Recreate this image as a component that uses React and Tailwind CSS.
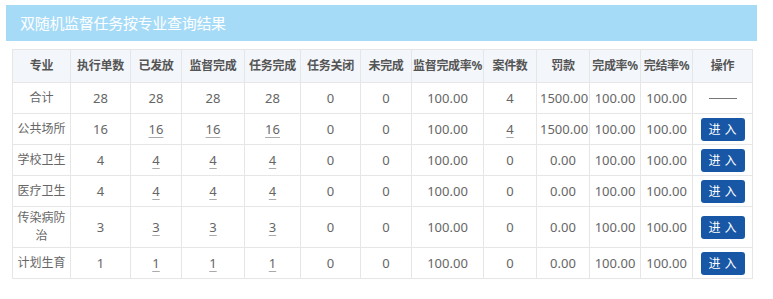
import React from 'react';

const cols = [
  { label: '专业', w: 58 },
  { label: '执行单数', w: 60 },
  { label: '已发放', w: 51 },
  { label: '监督完成', w: 63 },
  { label: '任务完成', w: 56 },
  { label: '任务关闭', w: 60 },
  { label: '未完成', w: 51 },
  { label: '监督完成率%', w: 72 },
  { label: '案件数', w: 53 },
  { label: '罚款', w: 53 },
  { label: '完成率%', w: 51 },
  { label: '完结率%', w: 52 },
  { label: '操作', w: 60 },
];

const rows = [
  { name: '合计', n: 28, sent: 28, done: 28, task: 28, close: 0, undone: 0, rate: '100.00', cases: 4, fine: '1500.00', c1: '100.00', c2: '100.00', total: true },
  { name: '公共场所', n: 16, sent: 16, done: 16, task: 16, close: 0, undone: 0, rate: '100.00', cases: 4, fine: '1500.00', c1: '100.00', c2: '100.00' },
  { name: '学校卫生', n: 4, sent: 4, done: 4, task: 4, close: 0, undone: 0, rate: '100.00', cases: 0, fine: '0.00', c1: '100.00', c2: '100.00' },
  { name: '医疗卫生', n: 4, sent: 4, done: 4, task: 4, close: 0, undone: 0, rate: '100.00', cases: 0, fine: '0.00', c1: '100.00', c2: '100.00' },
  { name: '传染病防治', n: 3, sent: 3, done: 3, task: 3, close: 0, undone: 0, rate: '100.00', cases: 0, fine: '0.00', c1: '100.00', c2: '100.00' },
  { name: '计划生育', n: 1, sent: 1, done: 1, task: 1, close: 0, undone: 0, rate: '100.00', cases: 0, fine: '0.00', c1: '100.00', c2: '100.00' },
];

// 可点击的数字（带下划线）
const Link = ({ value, on }) =>
  on && value !== 0 ? (
    <span className="underline decoration-[#aaa] underline-offset-[3px]">{value}</span>
  ) : (
    <span>{value}</span>
  );

export default function App() {
  const td = 'border border-[#e6e6e6] px-[3px] py-[2px] text-center leading-[18px]';

  return (
    <div
      className="w-[773px] h-[299px] bg-white pt-[5px] pl-[6px] overflow-hidden"
      style={{ fontFamily: '"Noto Sans", "Noto Sans CJK SC", sans-serif' }}
    >
      {/* 标题栏 */}
      <div className="w-[751px] h-[36px] bg-[#a6dbf8] flex items-center pl-[14px]">
        <span className="text-[15px] text-white tracking-[-0.3px]">双随机监督任务按专业查询结果</span>
      </div>

      <div className="pl-[6px] pt-[8px]">
        <table className="table-fixed border-collapse w-[740px] text-[13px] text-[#666]">
          <colgroup>
            {cols.map((c) => (
              <col key={c.label} style={{ width: c.w }} />
            ))}
          </colgroup>
          <thead>
            <tr className="h-[33px] bg-[#f3f6fa]">
              {cols.map((c) => (
                <th key={c.label} className="border border-[#e6e6e6] px-0 text-center text-[12px] font-bold text-[#555] whitespace-nowrap tracking-[-0.3px]">
                  {c.label}
                </th>
              ))}
            </tr>
          </thead>
          <tbody>
            {rows.map((r) => (
              <tr key={r.name} className="h-[31px]">
                <td className="border border-[#e6e6e6] px-[2px] py-[2px] text-center text-[12px] leading-[18px]">{r.name}</td>
                <td className={td}>{r.n}</td>
                <td className={td}><Link value={r.sent} on={!r.total} /></td>
                <td className={td}><Link value={r.done} on={!r.total} /></td>
                <td className={td}><Link value={r.task} on={!r.total} /></td>
                <td className={td}>{r.close}</td>
                <td className={td}>{r.undone}</td>
                <td className={td}>{r.rate}</td>
                <td className={td}><Link value={r.cases} on={!r.total} /></td>
                <td className={td}>{r.fine}</td>
                <td className={td}>{r.c1}</td>
                <td className={td}>{r.c2}</td>
                <td className={td}>
                  {r.total ? (
                    <div className="mx-auto w-[28px] h-px bg-[#777]" />
                  ) : (
                    <button className="w-[44px] h-[23px] rounded-[3px] bg-[#1757a6] text-white text-[12px] leading-[23px] tracking-[4px] pl-[4px]">
                      进入
                    </button>
                  )}
                </td>
              </tr>
            ))}
          </tbody>
        </table>
      </div>
    </div>
  );
}
